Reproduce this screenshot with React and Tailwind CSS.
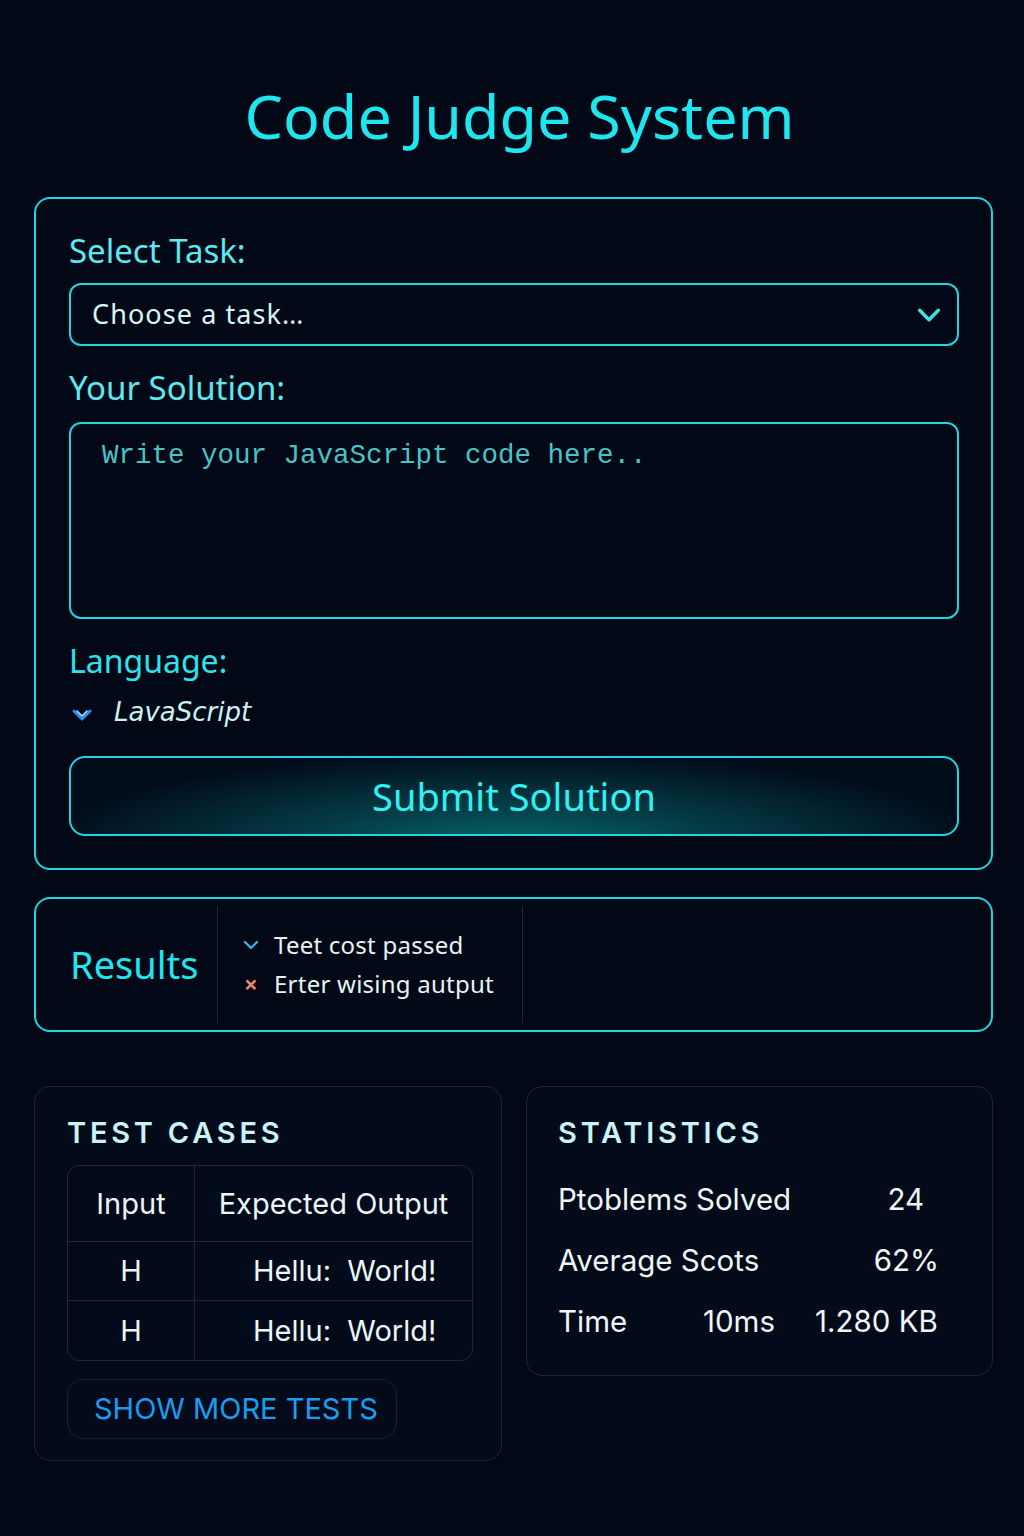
import React from 'react';

function Chevron({ className }) {
  return (
    <svg viewBox="0 0 24 24" className={className} fill="none" stroke="currentColor" strokeWidth="3" strokeLinecap="round" strokeLinejoin="round">
      <path d="M4 8l8 8 8-8" />
    </svg>
  );
}

export default function App() {
  const sans = { fontFamily: '"Noto Sans", "Open Sans", sans-serif' };
  return (
    <div className="w-[1024px] h-[1536px] bg-[#030817] text-white pt-[78px] pl-[34px] pr-[31px]" style={sans}>
      <h1 className="text-center text-[61px] leading-[76px] text-[#1de6ee] font-normal pl-[12px]">Code Judge System</h1>

      {/* form card */}
      <div className="mt-[43px] border-2 border-[#1fd6e0] rounded-2xl pl-[33px] pr-[32px] pt-[30px] pb-[32px]">
        <div className="text-[33px] leading-[44px] text-[#5ee8ef]">Select Task:</div>
        <div className="mt-[10px] h-[63px] border-2 border-[#1fd6e0] rounded-xl flex items-center justify-between pl-[21px] pr-[14px]">
          <span className="text-[27px] tracking-[0.04em] text-[#d5f6f7]">Choose a task…</span>
          <Chevron className="w-[28px] h-[28px] text-[#3de3df]" />
        </div>
        <div className="mt-[20px] text-[33px] leading-[44px] text-[#5ee8ef]">Your Solution:</div>
        <div className="mt-[12px] h-[197px] border-2 border-[#1fd6e0] rounded-xl px-[31px] pt-[11px]">
          <span className="text-[27.5px] text-[#48c3c6]" style={{ fontFamily: '"Liberation Mono", monospace' }}>Write your JavaScript code here..</span>
        </div>
        <div className="mt-[20px] text-[32px] leading-[44px] text-[#2ee3ec]">Language:</div>
        <div className="mt-[9px] flex items-center h-[40px]">
          <svg viewBox="0 0 24 24" className="w-[24px] h-[24px] ml-[1px] mt-[6px]" fill="none" stroke="#2b8cff" strokeWidth="3" strokeLinecap="round" strokeLinejoin="round">
            <path d="M4 8l8 8 8-8" />
            <path d="M7 8l5 5 5-5" stroke="#a9f0ff" strokeWidth="1.5" />
          </svg>
          <span className="ml-[20px] text-[26px] italic text-[#c9f3f5]" style={{ fontFamily: '"DejaVu Sans", sans-serif' }}>LavaScript</span>
        </div>
        <button className="mt-[24px] w-full h-[80px] border-2 border-[#1fd6e0] rounded-2xl bg-[radial-gradient(ellipse_at_50%_115%,#07666b_0%,#043a44_35%,#020d1c_75%)] text-[38px] text-[#2ff0f4]">
          Submit Solution
        </button>
      </div>

      {/* results */}
      <div className="mt-[27px] h-[135px] border-2 border-[#1fd6e0] rounded-2xl flex items-stretch py-[7px]">
        <div className="w-[181px] flex items-center pl-[34px] text-[38px] text-[#1fe6ee]">Results</div>
        <div className="w-[306px] border-l border-r border-[#1d2a38] flex flex-col justify-center pl-[24px] gap-[3px]">
          <div className="flex items-center gap-[14px] text-[24px] tracking-[0.01em] text-[#e6f4f4]">
            <Chevron className="w-[18px] h-[18px] text-[#2fb8e8]" />
            <span>Teet cost passed</span>
          </div>
          <div className="flex items-center gap-[14px] text-[24px] tracking-[0.01em] text-[#e6f4f4]">
            <span className="w-[18px] text-center text-[24px] text-[#e08a6a] font-bold leading-none">×</span>
            <span>Erter wising autput</span>
          </div>
        </div>
      </div>

      {/* bottom */}
      <div className="mt-[54px] grid grid-cols-[468px_467px] gap-[24px] items-start" style={{ fontFamily: 'Inter, "Noto Sans", sans-serif' }}>
        <div className="h-[375px] border border-[#1a2738] rounded-2xl bg-[#030a19] px-[32px] pt-[28px]">
          <div className="text-[29px] font-semibold tracking-[0.13em] text-[#c8f4f8] leading-[36px]">TEST CASES</div>
          <div className="mt-[14px] w-[406px] border border-[#1c2a3a] rounded-xl text-[29px] text-[#e9f7f8]">
            <div className="grid grid-cols-[127px_1fr] h-[76px] border-b border-[#1c2a3a]">
              <div className="flex items-center justify-center border-r border-[#1c2a3a]">Input</div>
              <div className="flex items-center justify-center">Expected Output</div>
            </div>
            <div className="grid grid-cols-[127px_1fr] h-[59px] border-b border-[#1c2a3a]">
              <div className="flex items-center justify-center border-r border-[#1c2a3a]">H</div>
              <div className="flex items-center pl-[58px]">Hellu:&nbsp; World!</div>
            </div>
            <div className="grid grid-cols-[127px_1fr] h-[59px]">
              <div className="flex items-center justify-center border-r border-[#1c2a3a]">H</div>
              <div className="flex items-center pl-[58px]">Hellu:&nbsp; World!</div>
            </div>
          </div>
          <button className="mt-[18px] w-[330px] h-[60px] border border-[#142236] rounded-2xl text-[29px] text-[#1a9cf0] text-left pl-[26px]">
            SHOW MORE TESTS
          </button>
        </div>

        <div className="h-[290px] border border-[#1a2738] rounded-2xl bg-[#030a19] pl-[31px] pr-[53px] pt-[28px]">
          <div className="text-[29px] font-semibold tracking-[0.13em] text-[#c8f4f8] leading-[36px]">STATISTICS</div>
          <div className="mt-[30px] text-[29.5px] text-[#eef7f8] flex flex-col gap-[25px]">
            <div className="flex justify-between h-[36px] items-center">
              <span>Ptoblems Solved</span>
              <span className="pr-[15px]">24</span>
            </div>
            <div className="flex justify-between h-[36px] items-center">
              <span>Average Scots</span>
              <span>62%</span>
            </div>
            <div className="flex h-[36px] items-center">
              <span className="w-[145px]">Time</span>
              <span className="w-[112px]">10ms</span>
              <span>1.280 KB</span>
            </div>
          </div>
        </div>
      </div>
    </div>
  );
}
